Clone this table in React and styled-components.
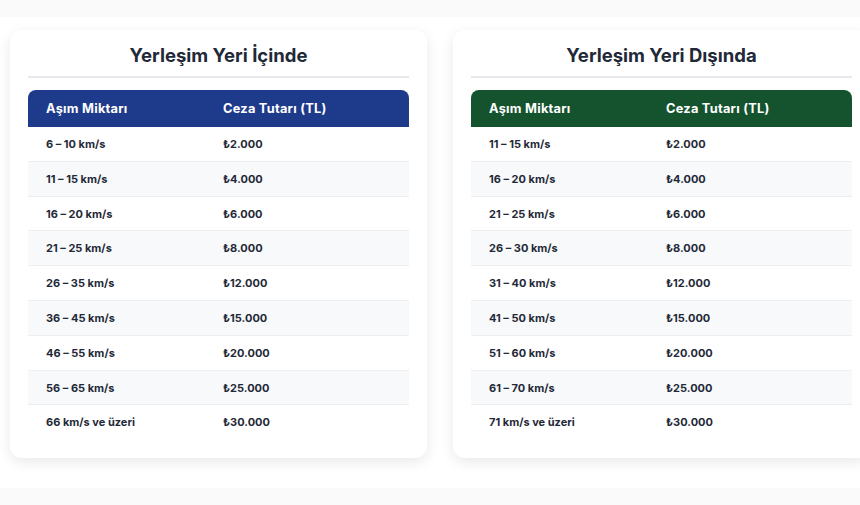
import React from 'react'
import styled, { createGlobalStyle } from 'styled-components'

const GlobalStyle = createGlobalStyle`
  body {
    margin: 0;
    background: #ffffff;
    font-family: Inter, "Noto Sans", sans-serif;
    overflow: hidden;
  }
`

const Band = styled.div`
  height: 17px;
  background: #fafafa;
`

const Section = styled.section`
  background: #ffffff;
  padding: 13px 10px 30px;
  overflow: hidden;
`

const CardRow = styled.div`
  display: flex;
  gap: 26px;
  width: 860px;
`

const Card = styled.div`
  flex: 0 0 417px;
  box-sizing: border-box;
  background: #ffffff;
  border-radius: 12px;
  box-shadow: 0 4px 14px rgba(0, 0, 0, 0.09);
  padding: 11px 18px 18px;
`

const Title = styled.h2`
  margin: 0 0 12px;
  padding-bottom: 7px;
  border-bottom: 2px solid #e7e9ec;
  font-size: 18.5px;
  line-height: 28px;
  font-weight: 700;
  color: #1f2937;
  text-align: center;
`

const Table = styled.table`
  width: 100%;
  border-collapse: separate;
  border-spacing: 0;
  table-layout: fixed;
`

const Th = styled.th`
  background: ${props => props.color};
  color: #ffffff;
  text-align: left;
  font-size: 12.8px;
  font-weight: 700;
  letter-spacing: 0.25px;
  line-height: 16px;
  padding: 11px 18px 10px;
  width: ${props => props.width || 'auto'};

  &:first-child {
    border-top-left-radius: 8px;
  }

  &:last-child {
    border-top-right-radius: 8px;
  }
`

const Tr = styled.tr`
  background: ${props => props.striped ? '#f8f9fb' : '#ffffff'};
`

const Td = styled.td`
  padding: 12px 18px 10px;
  line-height: 11.8px;
  font-size: 11px;
  font-weight: 700;
  color: #1f2937;
  border-bottom: 1px solid ${props => props.last ? 'transparent' : '#eceef1'};
`

const inside = [
  ['6 – 10 km/s', '₺2.000'],
  ['11 – 15 km/s', '₺4.000'],
  ['16 – 20 km/s', '₺6.000'],
  ['21 – 25 km/s', '₺8.000'],
  ['26 – 35 km/s', '₺12.000'],
  ['36 – 45 km/s', '₺15.000'],
  ['46 – 55 km/s', '₺20.000'],
  ['56 – 65 km/s', '₺25.000'],
  ['66 km/s ve üzeri', '₺30.000'],
]

const outside = [
  ['11 – 15 km/s', '₺2.000'],
  ['16 – 20 km/s', '₺4.000'],
  ['21 – 25 km/s', '₺6.000'],
  ['26 – 30 km/s', '₺8.000'],
  ['31 – 40 km/s', '₺12.000'],
  ['41 – 50 km/s', '₺15.000'],
  ['51 – 60 km/s', '₺20.000'],
  ['61 – 70 km/s', '₺25.000'],
  ['71 km/s ve üzeri', '₺30.000'],
]

const FineCard = ({ title, color, rows }) => (
  <Card>
    <Title>{title}</Title>
    <Table>
      <thead>
        <tr>
          <Th color={color} width="141px">Aşım Miktarı</Th>
          <Th color={color}>Ceza Tutarı (TL)</Th>
        </tr>
      </thead>
      <tbody>
        {rows.map(([range, fine], i) => (
          <Tr key={range} striped={i % 2 === 1}>
            <Td last={i === rows.length - 1}>{range}</Td>
            <Td last={i === rows.length - 1}>{fine}</Td>
          </Tr>
        ))}
      </tbody>
    </Table>
  </Card>
)

const App = () => (
  <>
    <GlobalStyle />
    <Band />
    <Section>
      <CardRow>
        <FineCard title="Yerleşim Yeri İçinde" color="#1e3a8a" rows={inside} />
        <FineCard title="Yerleşim Yeri Dışında" color="#14532d" rows={outside} />
      </CardRow>
    </Section>
    <Band />
  </>
)

export default App
